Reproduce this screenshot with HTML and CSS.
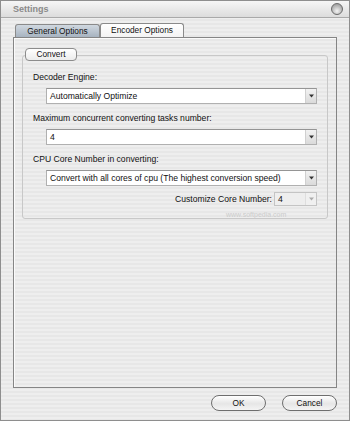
FILE: index.html
```html
<!DOCTYPE html>
<html lang="en">
<head>
    <meta charset="UTF-8">
    <title>Settings</title>
    <link rel="stylesheet" href="styles.css">
</head>
<body>
    <div class="window">
        <div class="titlebar">
            <span class="title">Settings</span>
            <span class="close"></span>
        </div>

        <div class="content">
            <div class="tabs">
                <div class="tab active">General Options</div>
                <div class="tab">Encoder Options</div>
            </div>

            <div class="panel">
                <div class="group">
                    <div class="legend">Convert</div>

                    <div class="field">
                        <div class="label">Decoder Engine:</div>
                        <div class="select">
                            <span class="value">Automatically Optimize</span>
                            <span class="arrow"><svg width="5" height="4" viewBox="0 0 5 4"><path d="M0 0.5h5L2.5 3.5z" fill="#333"/></svg></span>
                        </div>
                    </div>

                    <div class="field">
                        <div class="label">Maximum concurrent converting tasks number:</div>
                        <div class="select">
                            <span class="value">4</span>
                            <span class="arrow"><svg width="5" height="4" viewBox="0 0 5 4"><path d="M0 0.5h5L2.5 3.5z" fill="#333"/></svg></span>
                        </div>
                    </div>

                    <div class="field">
                        <div class="label">CPU Core Number in converting:</div>
                        <div class="select">
                            <span class="value">Convert with all cores of cpu (The highest conversion speed)</span>
                            <span class="arrow"><svg width="5" height="4" viewBox="0 0 5 4"><path d="M0 0.5h5L2.5 3.5z" fill="#333"/></svg></span>
                        </div>
                    </div>

                    <div class="custom-row">
                        <span class="label">Customize Core Number:</span>
                        <div class="select small disabled">
                            <span class="value">4</span>
                            <span class="arrow"><svg width="5" height="4" viewBox="0 0 5 4"><path d="M0 0.5h5L2.5 3.5z" fill="#aaa"/></svg></span>
                        </div>
                    </div>

                    <span class="watermark">www.softpedia.com</span>
                </div>
            </div>

            <div class="footer">
                <button class="btn">OK</button>
                <button class="btn">Cancel</button>
            </div>
        </div>
    </div>
</body>
</html>
```

FILE: styles.css
```css
* {
    box-sizing: border-box;
}
body {
    margin: 0;
    font-family: "Liberation Sans", Arial, sans-serif;
    color: #111;
}
.window {
    width: 350px;
    height: 421px;
    border: 1px solid #8e8e8e;
    display: flex;
    flex-direction: column;
    background: repeating-linear-gradient(to bottom, #eeeeee 0 2px, #e7e7e7 2px 4px);
}
.titlebar {
    height: 17px;
    border-bottom: 1px solid #a9a9a9;
    background: linear-gradient(#f6f6f6, #dcdcdc);
    display: flex;
    align-items: center;
    justify-content: space-between;
    padding: 0 6px 0 12px;
}
.title {
    font-size: 9px;
    font-weight: bold;
    color: #8a8a8a;
}
.close {
    width: 12px;
    height: 12px;
    border-radius: 50%;
    border: 1px solid #6a6a6a;
    background: radial-gradient(circle at 50% 70%, #f4f4f4 0, #c4c4c4 45%, #8c8c8c 100%);
}
.content {
    flex: 1;
    display: flex;
    flex-direction: column;
    padding: 5px 12px 0;
}
.tabs {
    display: flex;
    height: 14px;
    padding-left: 2px;
    align-items: flex-end;
}
.tab {
    width: 84px;
    height: 14px;
    border: 1px solid #8a8a8a;
    border-bottom: none;
    border-radius: 3px 3px 0 0;
    background: linear-gradient(#ffffff, #f3f3f3);
    font-size: 8.3px;
    line-height: 13px;
    text-align: center;
}
.tab.active {
    width: 85px;
    height: 13px;
    line-height: 12px;
    background: linear-gradient(#d0d8e0, #a7b3c0);
}
.panel {
    flex: 1;
    border: 1px solid #858585;
    box-shadow: inset 1px 1px 0 #fafafa;
    padding: 17px 8px 0;
}
.group {
    position: relative;
    border: 1px solid #c8c8c8;
    border-radius: 3px;
    padding: 15px 10px 12px;
}
.legend {
    position: absolute;
    top: -8px;
    left: 2px;
    width: 52px;
    height: 13px;
    border: 1px solid #8c8c8c;
    border-radius: 4px;
    background: linear-gradient(#ffffff, #ececec);
    font-size: 8.3px;
    line-height: 11px;
    text-align: center;
}
.field {
    margin-bottom: 8px;
}
.label {
    font-size: 8.6px;
    line-height: 12px;
}
.select {
    display: flex;
    height: 16px;
    margin: 5px 0 0 13px;
    border: 1px solid #b0b0b0;
    border-top-color: #959595;
    background: #fff;
    font-size: 8.6px;
}
.value {
    flex: 1;
    padding-left: 3px;
    line-height: 14px;
    white-space: nowrap;
    overflow: hidden;
}
.arrow {
    width: 11px;
    display: flex;
    align-items: center;
    justify-content: center;
    border-left: 1px solid #d0d0d0;
    background: linear-gradient(#f2f2f2, #dadada);
}
.custom-row {
    display: flex;
    justify-content: flex-end;
    align-items: center;
    gap: 2px;
    margin-top: -2px;
}
.select.small {
    width: 43px;
    height: 14px;
    margin: 0;
}
.select.small .value {
    line-height: 12px;
}
.select.disabled {
    background: #eeeeee;
    border-color: #c4c4c4;
}
.select.disabled .arrow {
    background: #f0f0f0;
    border-left-color: #dedede;
}
.watermark {
    position: absolute;
    left: 203px;
    bottom: 0;
    font-size: 7px;
    color: #cbcbcb;
}
.footer {
    height: 32px;
    display: flex;
    justify-content: flex-end;
    gap: 16px;
    padding: 7px 0 0;
}
.btn {
    width: 55px;
    height: 16px;
    padding: 0;
    border: 1px solid #6e6e6e;
    border-radius: 8px;
    background: linear-gradient(#ffffff, #e6e6e6 55%, #f4f4f4);
    font-family: "Liberation Sans", Arial, sans-serif;
    font-size: 8.3px;
    color: #111;
}
```
